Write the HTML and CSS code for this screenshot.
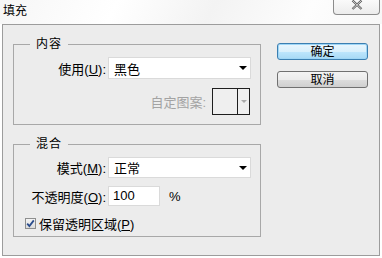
FILE: index.html
```html
<!DOCTYPE html>
<html>
<head>
<meta charset="utf-8">
<link rel="stylesheet" href="styles.css">
</head>
<body>
<div class="window">
  <div class="titlebar">
    <span class="title">填充</span>
    <div class="close">
      <svg width="12" height="10" viewBox="0 0 12 10"><path d="M1.5 0.5 L10.5 9 M10.5 0.5 L1.5 9" stroke="#555" stroke-width="2.2" fill="none"/><path d="M1.5 0.5 L10.5 9 M10.5 0.5 L1.5 9" stroke="#f4f4f4" stroke-width="0.8" fill="none"/></svg>
    </div>
  </div>
  <div class="dialog">
    <div class="main">
      <fieldset class="group g1">
        <legend>内容</legend>
        <div class="row r-use">
          <span class="lbl">使用(<u>U</u>):</span>
          <div class="select"><span>黑色</span><span class="arrow"></span></div>
        </div>
        <div class="row r-pattern">
          <span class="lbl-dis">自定图案:</span>
          <div class="pattern"><div class="swatch"></div><div class="pat-btn"><span class="pat-arrow"></span></div></div>
        </div>
      </fieldset>
      <fieldset class="group g2">
        <legend>混合</legend>
        <div class="row r-mode">
          <span class="lbl">模式(<u>M</u>):</span>
          <div class="select sel2"><span>正常</span><span class="arrow"></span></div>
        </div>
        <div class="row r-opacity">
          <span class="lbl">不透明度(<u>O</u>):</span>
          <div class="input">100</div>
          <span class="pct">%</span>
        </div>
        <div class="row r-check">
          <span class="checkbox">
            <svg width="9" height="9" viewBox="0 0 9 9"><path d="M1.2 4.6 L3.4 7 L7.8 1.4" stroke="#2a4c8c" stroke-width="1.8" fill="none"/></svg>
          </span>
          <span class="check-label">保留透明区域(<u>P</u>)</span>
        </div>
      </fieldset>
    </div>
    <div class="buttons">
      <div class="btn primary">确定</div>
      <div class="btn">取消</div>
    </div>
  </div>
</div>
</body>
</html>
```
FILE: styles.css
```css
* { box-sizing: border-box; }
html, body { margin: 0; padding: 0; }
body {
  width: 382px;
  height: 258px;
  background: #ffffff;
  font-family: "Liberation Sans", "Noto Sans CJK SC", sans-serif;
  font-size: 12px;
  color: #000;
  overflow: hidden;
}
.window { width: 382px; height: 258px; }
.titlebar {
  height: 24px;
  display: flex;
  justify-content: space-between;
  align-items: flex-start;
  background: linear-gradient(115deg, #f6f6f6 0%, #ffffff 30%, #f3f3f3 55%, #fdfdfd 80%, #f7f7f7 100%);
}
.title {
  font-size: 12px;
  line-height: 14px;
  padding: 4px 0 0 3px;
}
.close {
  width: 47px;
  height: 15px;
  margin-right: 2px;
  border: 1px solid #8c8c8c;
  border-top: none;
  border-radius: 0 0 4px 4px;
  background: linear-gradient(#fafafa, #ececec);
  display: flex;
  justify-content: center;
  align-items: flex-start;
}
.dialog {
  margin: 0 2px;
  height: 232px;
  border: 1px solid #9c9c9c;
  background: #ececec;
  display: flex;
  padding: 12px 0 0 10px;
}
.main { width: 248px; display: flex; flex-direction: column; }
.group {
  margin: 0;
  border: 1px solid #a8a8a8;
  padding: 6px 0 9px 0;
  min-width: 0;
}
.group legend {
  margin-left: 16px;
  padding: 0 6px;
  line-height: 14px;
  height: 14px;
  font-size: 12px;
  letter-spacing: 1px;
}
.g2 { margin-top: 12px; padding: 6px 0 6px 0; }
.row { display: flex; align-items: center; font-size: 13px; }
.lbl {
  width: 92px;
  text-align: right;
  margin-right: 2px;
  white-space: nowrap;
}
.lbl u, .check-label u { text-decoration: underline; }
.select {
  width: 143px;
  height: 22px;
  background: #fff;
  border: 1px solid #dadada;
  display: flex;
  align-items: center;
  justify-content: space-between;
  padding: 0 2px 0 5px;
}
.sel2 { height: 21px; }
.arrow {
  width: 0; height: 0;
  border-left: 4px solid transparent;
  border-right: 4px solid transparent;
  border-top: 4px solid #000;
  margin-right: 1px;
}
.r-pattern {
  justify-content: flex-end;
  padding-right: 10px;
  margin-top: 9px;
}
.lbl-dis { color: #a3a3a3; margin-right: 6px; }
.pattern {
  width: 38px;
  height: 27px;
  border: 1px solid #1e1e1e;
  display: flex;
  background: #efefef;
}
.swatch { width: 25px; height: 100%; border-right: 1px solid #1e1e1e; }
.pat-btn { flex: 1; display: flex; align-items: center; justify-content: center; }
.pat-arrow {
  width: 0; height: 0;
  border-left: 3px solid transparent;
  border-right: 3px solid transparent;
  border-top: 3px solid #aaaaaa;
}
.r-opacity { margin-top: 8px; }
.input {
  width: 52px;
  height: 20px;
  background: #fff;
  border: 1px solid #dadada;
  padding: 0 0 0 4px;
  line-height: 18px;
}
.pct { margin-left: 9px; }
.r-check { margin-top: 10px; height: 14px; padding-left: 11px; }
.checkbox {
  width: 11px;
  height: 11px;
  border: 1px solid #8e8f8f;
  background: linear-gradient(#f4f4f4, #dcdcdc);
  display: flex;
  align-items: center;
  justify-content: center;
  margin-right: 3px;
}
.buttons {
  margin-left: 16px;
  padding-top: 6px;
  display: flex;
  flex-direction: column;
  gap: 11px;
}
.btn {
  width: 91px;
  height: 17px;
  border: 1px solid #707070;
  border-radius: 3px;
  background: linear-gradient(#f3f3f3 0%, #ebebeb 50%, #dddddd 51%, #cfcfcf 100%);
  display: flex;
  align-items: center;
  justify-content: center;
  line-height: 14px;
}
.btn.primary {
  border-color: #3c7fb1;
  background: linear-gradient(#eaf6fd 0%, #d9f0fc 50%, #bee6fd 51%, #a7d9f5 100%);
  box-shadow: inset 0 0 0 1px #9fd6f6;
}
```
